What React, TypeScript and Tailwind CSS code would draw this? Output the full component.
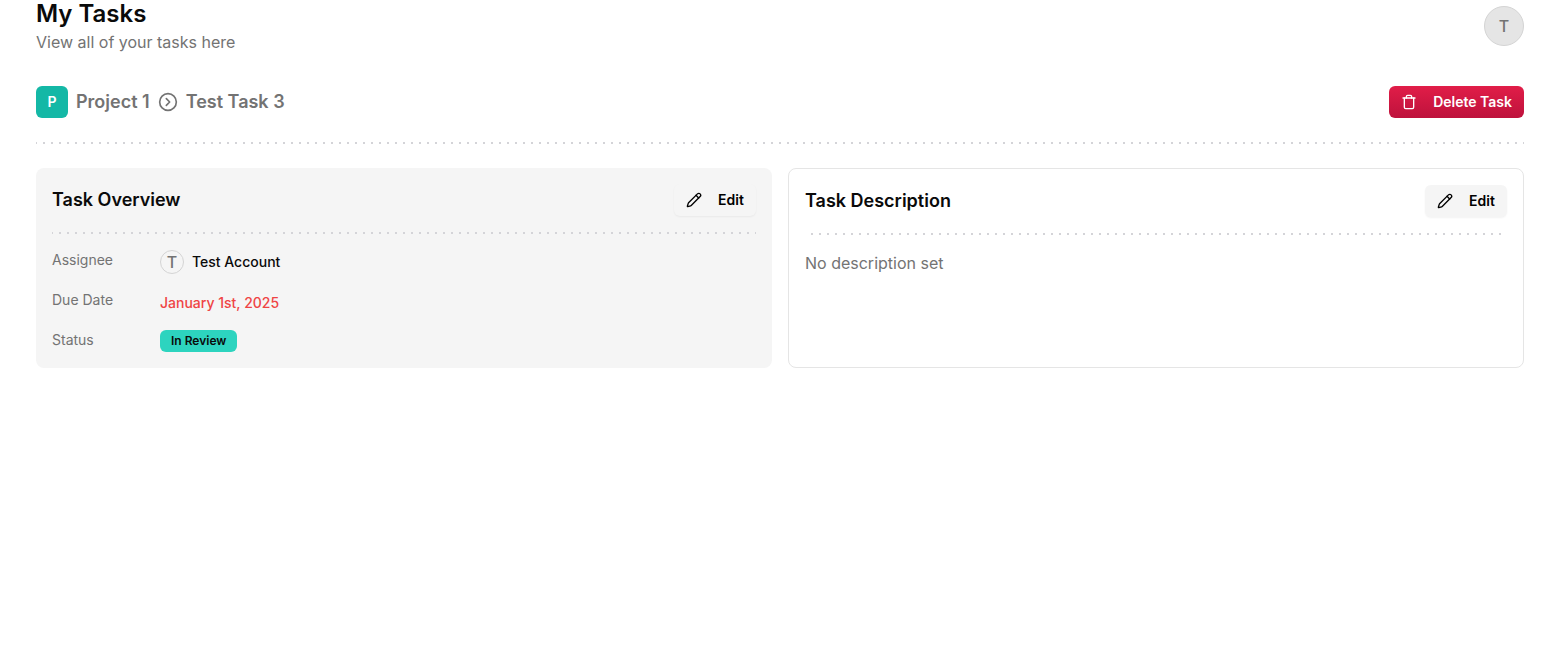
import type { ReactNode } from 'react'
import { CircleChevronRight, Pencil, Trash } from 'lucide-react'

function DottedSeparator({ className = '' }: { className?: string }) {
  return (
    <div
      className={`h-[2px] w-full bg-[radial-gradient(circle,#d4d4d8_25%,transparent_25%)] bg-[length:8px_2px] bg-center ${className}`}
    />
  )
}

function EditButton() {
  return (
    <button className="flex h-8 w-[82px] items-center rounded-md bg-[#f5f5f5] px-3 text-sm font-semibold text-black shadow-xs">
      <Pencil className="mr-4 size-4 shrink-0" />
      Edit
    </button>
  )
}

function OverviewRow({ label, children }: { label: string; children: ReactNode }) {
  return (
    <div className="flex min-h-6 items-start gap-x-2">
      <p className="w-[100px] text-sm text-[#737373]">{label}</p>
      {children}
    </div>
  )
}

export default function App() {
  return (
    <div className="min-h-screen bg-white pr-[39px] pl-9 font-[Inter,sans-serif] text-neutral-950">
      <header className="flex h-[52px] items-start justify-between">
        <div className="-mt-0.5">
          <h1 className="text-2xl font-semibold">My Tasks</h1>
          <p className="text-[#737373]">View all of your tasks here</p>
        </div>
        <div className="mt-1.5 flex size-10 items-center justify-center rounded-full border border-neutral-300 bg-neutral-200 font-medium text-[#737373]">
          T
        </div>
      </header>

      <div className="mt-[34px] flex items-center gap-x-2">
        <div className="flex size-8 items-center justify-center rounded-md bg-[#14b8a6] text-sm font-semibold text-white">
          P
        </div>
        <p className="text-lg font-semibold text-[#737373]">Project 1</p>
        <CircleChevronRight className="size-5 text-[#737373]" />
        <p className="text-lg font-semibold text-[#737373]">Test Task 3</p>
        <button className="ml-auto flex h-8 items-center rounded-md bg-linear-to-b from-[#e11d48] to-[#be123c] px-3 text-sm font-semibold text-white">
          <Trash className="mr-4 size-4 shrink-0" />
          Delete Task
        </button>
      </div>

      <DottedSeparator className="my-6" />

      <div className="grid grid-cols-2 gap-4">
        {/* Overview */}
        <div className="h-[200px] rounded-lg bg-neutral-100 p-4">
          <div className="flex items-center justify-between">
            <p className="text-lg font-semibold">Task Overview</p>
            <EditButton />
          </div>
          <DottedSeparator className="my-4" />
          <div className="flex flex-col gap-y-4">
            <OverviewRow label="Assignee">
              <div className="flex items-center gap-x-2">
                <div className="flex size-6 items-center justify-center rounded-full border border-neutral-300 font-medium text-[#737373]">
                  T
                </div>
                <p className="text-sm font-medium">Test Account</p>
              </div>
            </OverviewRow>
            <OverviewRow label="Due Date">
              <div>
                <span className="text-sm font-medium text-[#ef4444]">January 1st, 2025</span>
              </div>
            </OverviewRow>
            <OverviewRow label="Status">
              <span className="rounded-md border border-transparent bg-[#2dd4bf] px-2.5 py-0.5 text-xs font-semibold">
                In Review
              </span>
            </OverviewRow>
          </div>
        </div>

        {/* Description */}
        <div className="h-[200px] rounded-lg border border-neutral-200 p-4">
          <div className="flex items-center justify-between">
            <p className="text-lg font-semibold">Task Description</p>
            <EditButton />
          </div>
          <DottedSeparator className="my-4" />
          <p className="text-[#737373]">No description set</p>
        </div>
      </div>
    </div>
  )
}
